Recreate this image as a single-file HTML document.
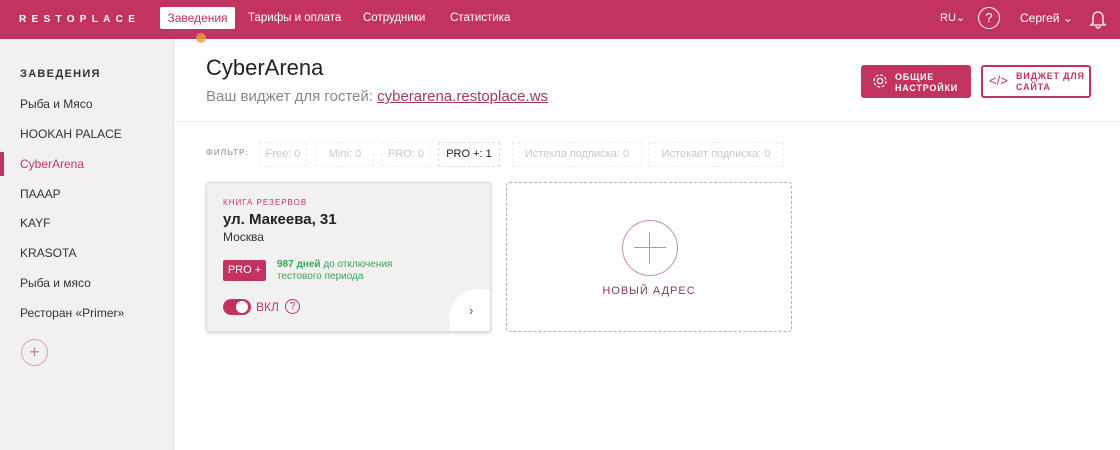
<!DOCTYPE html>
<html><head><meta charset="utf-8"><style>
*{box-sizing:border-box;margin:0;padding:0}
body{width:1120px;height:450px;overflow:hidden;font-family:"Liberation Sans","DejaVu Sans",sans-serif;background:#fff;position:relative;color:#222}
.hdr{position:absolute;left:0;top:0;width:1120px;height:39px;background:#c2345e;color:#fff;font-size:12px}
.abs{position:absolute}
.side{position:absolute;left:0;top:39px;width:174px;height:411px;background:#f2f1f1;border-right:1px solid #e2e2e2}
.si{position:absolute;left:20px;font-size:12px;color:#333}
.pink{color:#c2345e}
.fb{position:absolute;top:142px;height:25px;border:1px dashed #eee;font-size:11px;color:#c8c8c8;line-height:23px;text-align:center}
</style></head><body>
<div class="hdr">
<div class="abs" style="left:19px;top:14px;font-size:10px;font-weight:bold;letter-spacing:5.3px">RESTOPLACE</div>
<div class="abs" style="left:160px;top:7px;width:75px;height:22px;background:#fff;border-radius:2px;color:#c2345e;line-height:22px;text-align:center">Заведения</div>
<div class="abs" style="left:248px;top:12px;font-size:11.5px">Тарифы и оплата</div>
<div class="abs" style="left:363px;top:12px;font-size:11.5px">Сотрудники</div>
<div class="abs" style="left:450px;top:12px;font-size:11.5px">Статистика</div>
<div class="abs" style="left:940px;top:11px;font-size:11px">RU⌄</div>
<div class="abs" style="left:978px;top:7px;width:22px;height:22px;border:1px solid #fff;border-radius:50%;text-align:center;line-height:20px;font-size:13px">?</div>
<div class="abs" style="left:1020px;top:11px">Сергей ⌄</div>
<svg class="abs" style="left:1089px;top:9px" width="18" height="20" viewBox="0 0 18 20"><path d="M4 14V8a5 5 0 0 1 10 0v6l2 2H2z M7 17a2 2 0 0 0 4 0" fill="none" stroke="#fff" stroke-width="1.3"/></svg>
</div>
<div class="abs" style="left:196px;top:33px;width:10px;height:10px;border-radius:50%;background:#e6a040;opacity:.8"></div>
<div class="side">
<div class="si" style="top:29px;font-size:11px;font-weight:bold;letter-spacing:1.3px;color:#333">ЗАВЕДЕНИЯ</div>
<div class="si" style="top:58px">Рыба и Мясо</div>
<div class="si" style="top:88px">HOOKAH PALACE</div>
<div class="abs" style="left:0;top:113px;width:4px;height:24px;background:#c2345e"></div>
<div class="si pink" style="top:118px">CyberArena</div>
<div class="si" style="top:148px">ПААAP</div>
<div class="si" style="top:177px">KAYF</div>
<div class="si" style="top:207px">KRASOTA</div>
<div class="si" style="top:237px">Рыба и мясо</div>
<div class="si" style="top:267px">Ресторан «Primer»</div>
<div class="abs" style="left:21px;top:300px;width:27px;height:27px;border:1px solid #d9a0b4;border-radius:50%;color:#d08099;text-align:center;line-height:24px;font-size:18px">+</div>
</div>
<div class="abs" style="left:206px;top:55px;font-size:22px;color:#222">CyberArena</div>
<div class="abs" style="left:206px;top:88px;font-size:15px;color:#888">Ваш виджет для гостей: <span style="color:#a8385d;text-decoration:underline">cyberarena.restoplace.ws</span></div>
<div class="abs" style="left:175px;top:121px;width:945px;height:1px;background:#ececec"></div>
<div class="abs" style="left:861px;top:65px;width:110px;height:33px;background:#c2345e;border-radius:3px;color:#fff;font-size:9px;font-weight:bold;letter-spacing:.8px;line-height:11px;padding:7px 0 0 34px">ОБЩИЕ<br>НАСТРОЙКИ</div>
<svg class="abs" style="left:871px;top:72px" width="18" height="18" viewBox="0 0 18 18"><circle cx="9" cy="9" r="2.7" fill="none" stroke="#fff" stroke-width="1.2"/><circle cx="9" cy="9" r="6" fill="none" stroke="#fff" stroke-width="1.2" stroke-dasharray="3 1.7"/></svg>
<div class="abs" style="left:981px;top:65px;width:110px;height:33px;border:2px solid #c2345e;border-radius:3px;color:#c2345e;font-size:9px;font-weight:bold;letter-spacing:.8px;line-height:11px;padding:4px 0 0 33px">ВИДЖЕТ ДЛЯ<br>САЙТА</div>
<div class="abs" style="left:989px;top:73px;color:#c2345e;font-size:13px">&lt;/&gt;</div>
<div class="abs" style="left:206px;top:148px;font-size:8px;font-weight:bold;color:#aaa;letter-spacing:1px">ФИЛЬТР:</div>
<div class="fb" style="left:259px;width:48px">Free: 0</div>
<div class="fb" style="left:316px;width:58px">Mini: 0</div>
<div class="fb" style="left:381px;width:50px">PRO: 0</div>
<div class="fb" style="left:438px;width:62px;border-color:#ddd;color:#222">PRO +: 1</div>
<div class="fb" style="left:512px;width:130px">Истекла подписка: 0</div>
<div class="fb" style="left:648px;width:136px">Истекает подписка: 0</div>
<div class="abs" style="left:206px;top:182px;width:285px;height:150px;background:#f2f1f1;border:1px solid #ddd;border-radius:3px;box-shadow:0 1px 3px rgba(0,0,0,.2);overflow:hidden">
<div class="abs" style="left:16px;top:15px;font-size:8px;color:#c2345e;letter-spacing:1px">КНИГА РЕЗЕРВОВ</div>
<div class="abs" style="left:16px;top:28px;font-size:15px;font-weight:bold;color:#222">ул. Макеева, 31</div>
<div class="abs" style="left:16px;top:47px;font-size:12px;color:#333">Москва</div>
<div class="abs" style="left:16px;top:77px;width:43px;height:21px;background:#c2345e;border-radius:2px;color:#fff;font-size:11px;line-height:21px;text-align:center">PRO +</div>
<div class="abs" style="left:70px;top:76px;font-size:10px;color:#3aa55a;line-height:12px"><b>987 дней</b> до отключения<br>тестового периода</div>
<div class="abs" style="left:16px;top:116px;width:28px;height:16px;background:#c2345e;border-radius:8px"><div class="abs" style="left:13px;top:2px;width:12px;height:12px;border-radius:50%;background:#fff"></div></div>
<div class="abs" style="left:49px;top:117px;font-size:12px;color:#c2345e">ВКЛ</div>
<div class="abs" style="left:78px;top:116px;width:15px;height:15px;border:1px solid #c2345e;border-radius:50%;color:#c2345e;font-size:10px;text-align:center;line-height:13px">?</div>
<div class="abs" style="left:242px;top:106px;width:60px;height:60px;border-radius:50%;background:#fff"></div>
<div class="abs" style="left:262px;top:120px;font-size:13px;color:#555">›</div>
</div>
<div class="abs" style="left:506px;top:182px;width:286px;height:150px;border:1px dashed #d5a3b5;border-radius:3px">
<div class="abs" style="left:115px;top:37px;width:56px;height:56px;border:1px solid #c98a9f;border-radius:50%"></div>
<div class="abs" style="left:142px;top:49px;width:1px;height:32px;background:#c98a9f"></div>
<div class="abs" style="left:127px;top:64px;width:32px;height:1px;background:#c98a9f"></div>
<div class="abs" style="left:0;top:102px;width:284px;text-align:center;font-size:11px;color:#8a3a55;letter-spacing:1px">НОВЫЙ АДРЕС</div>
</div>
</body></html>
